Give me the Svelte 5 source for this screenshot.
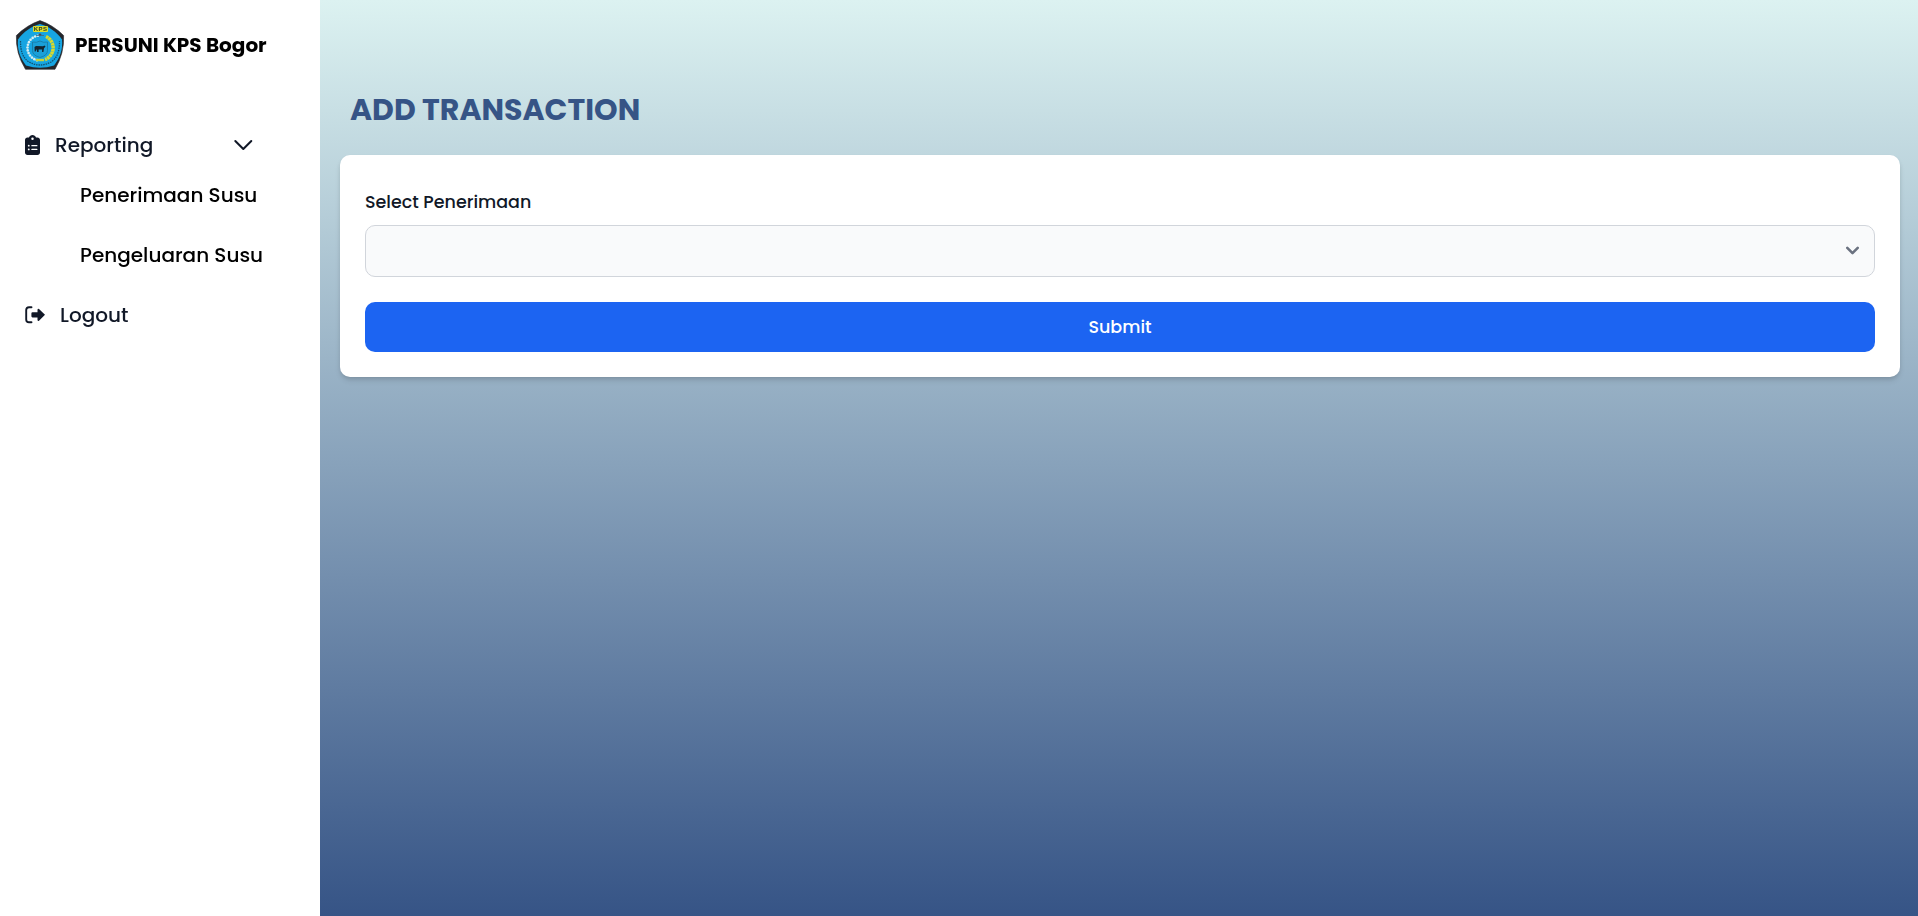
<script>
  const items = ['Penerimaan Susu', 'Pengeluaran Susu'];
  const dots = Array.from({ length: 13 }, (_, i) => {
    const a = ((100 + i * 13) * Math.PI) / 180;
    return { x: 25 + 12.5 * Math.cos(a), y: 28 - 12.5 * Math.sin(a) };
  });
</script>

<div class="page">
  <aside>
    <div class="brand">
      <svg class="logo" viewBox="0 0 50 50">
        <path d="M25 .6Q38 5 48.600 15.500Q49.500 33 40 49.300H10.500Q.5 33 1.400 15.500Q12 5 25 .6Z" fill="#24262b" stroke="#24262b" stroke-width=".6" stroke-linejoin="round" />
        <path d="M25 4C33 6 42 12 47 19.500C48 29 45 38 39 45.500Q25 50 11 45.500C5 38 2 29 3 19.500C8 12 17 6 25 4Z" fill="#16a5e2" />
        <rect x="18" y="6" width="15" height="6" rx="1" fill="#d7dc30" />
        <text x="25.700" y="11.200" text-anchor="middle" class="kps">KPS</text>
        <path d="M31 16.500A12.500 12.500 0 0 1 30 39.500" fill="none" stroke="#d9d92e" stroke-width="3.500" stroke-dasharray="2.600 .4" />
        {#each dots as d}
          <circle cx={d.x} cy={d.y} r="1.3" fill="#d9eef0" />
        {/each}
        <circle cx="25" cy="14.800" r="1.400" fill="#4b4a55" />
        <path d="M21 15.500h8" stroke="#446677" stroke-width=".8" />
        <path d="M21 40h8" stroke="#c8d238" stroke-width="2.400" />
        <path d="M17.500 22q4 1 7.500-1q3.500 2 7.500 1v8.500q0 5-7.500 7q-7.500-2-7.500-7Z" fill="#1aa0d8" stroke="#1877a0" stroke-width=".8" />
        <path d="M19.500 27l1.500-1 7 .3 1.500-.8 1 1-1.500 1.700-.6 3.800h-1.300v-2.500h-3.500v2.500h-1.400l-.6-3-1 2.500h-.9Z" fill="#14242e" />
        <path d="M5.500 21C5.500 32 8 38 14 42Q25 48 36 42C42 38 44.500 32 44.500 21" fill="none" stroke="#14506e" stroke-width="1.300" stroke-dasharray="1.500 .9" />
      </svg>
      <span class="name">PERSUNI KPS Bogor</span>
    </div>
    <nav>
      <div class="row">
        <svg class="clip" viewBox="0 0 384 512"><path fill="currentColor" fill-rule="evenodd" d="M192 0c-41.800 0-77.400 26.700-90.500 64H64C28.700 64 0 92.700 0 128v320c0 35.300 28.700 64 64 64h256c35.300 0 64-28.700 64-64V128c0-35.300-28.700-64-64-64h-37.500C269.400 26.700 233.800 0 192 0zm0 64a32 32 0 1 1 0 64 32 32 0 1 1 0-64zM72 272a24 24 0 1 1 48 0 24 24 0 1 1-48 0zm104-16h128c8.800 0 16 7.200 16 16s-7.200 16-16 16H176c-8.800 0-16-7.200-16-16s7.200-16 16-16zM72 368a24 24 0 1 1 48 0 24 24 0 1 1-48 0zm88 0c0-8.800 7.200-16 16-16h128c8.800 0 16 7.200 16 16s-7.200 16-16 16H176c-8.800 0-16-7.200-16-16z" /></svg>
        <span class="reporting">Reporting</span>
        <svg class="chev" viewBox="0 0 20 12"><path d="M2.300 2l8 8 8-8" fill="none" stroke="currentColor" stroke-width="2" stroke-linecap="round" stroke-linejoin="round" /></svg>
      </div>
      {#each items as item}
        <div class="sub"><span>{item}</span></div>
      {/each}
      <div class="row">
        <svg class="exit" viewBox="0 0 20 18"><path d="M6.500 1.200H4Q1.200 1.200 1.200 4v9.500Q1.200 16.300 4 16.300H6.500" fill="none" stroke="currentColor" stroke-width="1.900" stroke-linecap="round" /><path d="M7.500 6.200h5V3.700q.3-1.500 1.500-.8L20 8.800l-6 5.900q-1.200.7-1.500-.8v-2.500h-5q-1.100-.1-1.100-1.200V7.400q0-1.100 1.100-1.200Z" fill="currentColor" /></svg>
        <span>Logout</span>
      </div>
    </nav>
  </aside>
  <main>
    <h1><span>ADD TRANSACTION</span></h1>
    <form onsubmit={(e) => e.preventDefault()}>
      <label for="penerimaan">Select Penerimaan</label>
      <select id="penerimaan"></select>
      <button>Submit</button>
    </form>
  </main>
</div>

<style>
  .page { display: flex; height: 916px; font-family: Poppins, Inter, sans-serif; font-weight: 500; color: #000; background: linear-gradient(#dcf2f1, #365486); }
  aside { width: 320px; box-sizing: border-box; background: #fff; flex: none; will-change: transform; }
  span { white-space: nowrap; }
  .brand { display: flex; align-items: center; height: 50px; padding: 20px 0 0 15px; }
  .logo { width: 50px; height: 50px; }
  .kps { font: 700 6px "Liberation Sans", sans-serif; fill: #333c20; letter-spacing: .5px; }
  .name { margin-left: 10px; font-size: 20px; font-weight: 700; }
  nav { padding-top: 45px; color: #111827; font-size: 20px; }
  .row { display: flex; align-items: center; height: 60px; padding-left: 25px; }
  .clip { width: 15px; height: 20px; margin-right: 15px; }
  .reporting { width: 178px; }
  .chev { width: 20px; height: 12px; }
  .sub { display: flex; align-items: center; height: 60px; padding-left: 80px; color: #000; }
  .row + .sub { margin-top: -10px; }
  .exit { width: 20px; height: 18px; margin-right: 15px; }
  main { flex: 1; padding: 0 18px 0 20px; }
  h1 { margin: 0; height: 155px; padding: 90px 0 0 10px; box-sizing: border-box; font-size: 30px; line-height: 40px; color: #365486; font-weight: 700; }
  form { display: flex; flex-direction: column; height: 222px; box-sizing: border-box; padding: 35px 25px 25px; background: #fff; border-radius: 10px; box-shadow: 0 4px 6px -1px #0000001f, 0 2px 4px -1px #0000001a; }
  label { height: 35px; line-height: 25px; font-size: 17.5px; color: #111827; }
  select { appearance: none; flex: none; height: 52px; margin: 0 0 25px; border: 1px solid #d1d5db; border-radius: 10px; background: #f9fafb url("data:image/svg+xml,%3Csvg xmlns='http://www.w3.org/2000/svg' fill='none' viewBox='0 0 10 6'%3E%3Cpath stroke='%236B7280' stroke-linecap='round' stroke-linejoin='round' stroke-width='2' d='m1 1 4 4 4-4'/%3E%3C/svg%3E") no-repeat right 15.5px top 18px / 12.5px 12.5px; }
  button { height: 50px; border: 0; border-radius: 10px; background: #1c64f2; color: #fff; font: 500 17.5px Poppins, Inter, sans-serif; }
</style>
